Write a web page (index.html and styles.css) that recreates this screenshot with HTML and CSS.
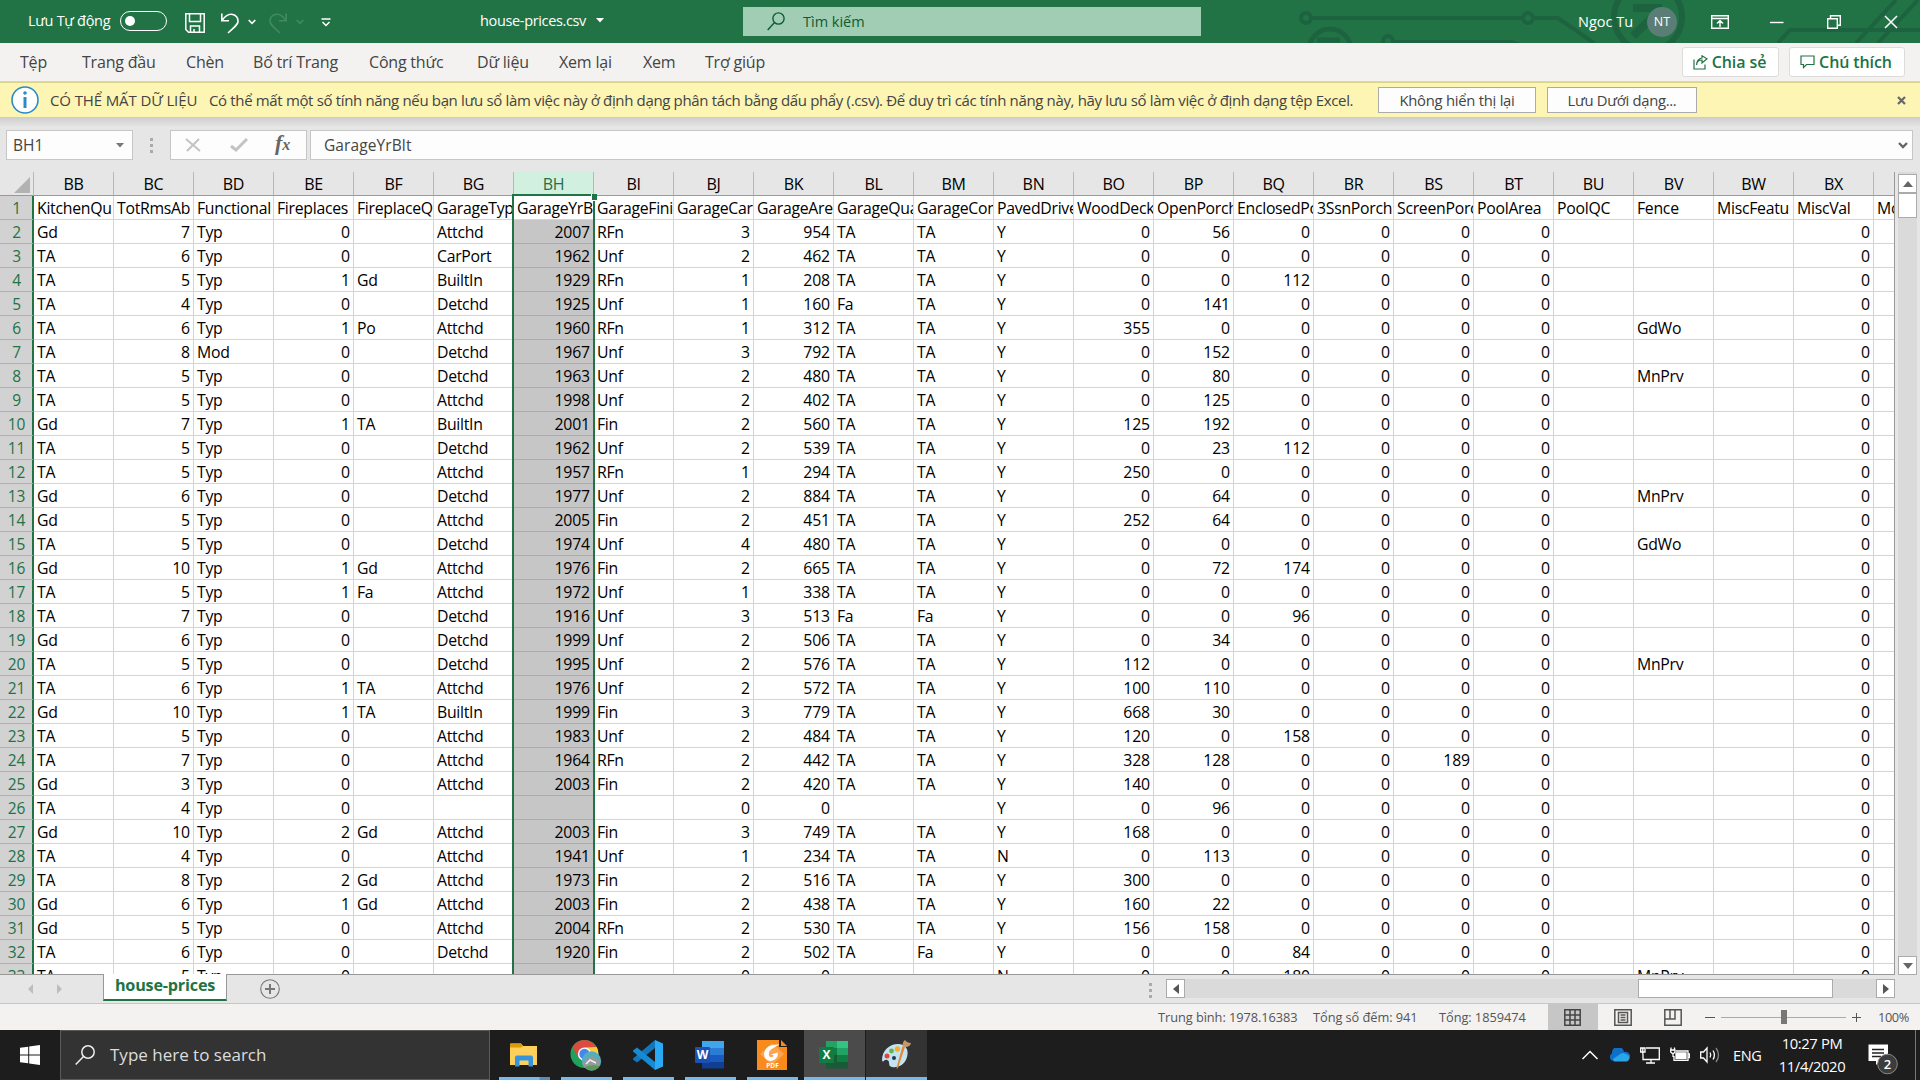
FILE: index.html
```html
<!DOCTYPE html>
<html lang="vi">
<head>
<meta charset="utf-8">
<title>house-prices.csv</title>
<link rel="stylesheet" href="styles.css">
</head>
<body>
<div class="screen">
  <header class="titlebar">
    <svg class="circuit" width="640" height="43" viewBox="1280 0 640 43" fill="none" stroke="#1e6340" stroke-width="4">
      <circle cx="1306" cy="18" r="5"/><path d="M1311 18H1522M1533 18H1558L1594 43"/><circle cx="1528" cy="18" r="5"/>
      <circle cx="1388" cy="41" r="5"/><path d="M1394 42H1512L1520 45"/>
      <circle cx="1330" cy="50" r="21" stroke-width="5"/><path d="M1317 40H1340" stroke-width="5"/>
      <circle cx="1648" cy="17" r="34" stroke-width="6"/><path d="M1633 8H1662M1662 8L1633 36" stroke-width="8"/>
      <path d="M1778 43L1790 30H1920M1856 43L1896 0M1878 43L1918 0"/>
    </svg>
    <span class="autosave">Lưu Tự động</span>
    <span class="toggle"><i></i></span>
    <svg class="ic save" width="20" height="20" viewBox="0 0 20 20" fill="none" stroke="#fff" stroke-width="1.5"><path d="M.8.8H19.2V19.2H3.5L.8 16.5ZM4.5 1V8.5H15.5V1M5.5 19V13H14.5V19M9 16V19"/></svg>
    <svg class="ic undo" width="20" height="21" viewBox="0 0 20 21" fill="none" stroke="#fff" stroke-width="1.6"><path d="M1.8.5V7.8H9M2 7.5C5 3 8 1 11.500 1.200C16 1.500 18.500 5 18 9C17.500 11.500 16 13 8 20"/></svg>
    <svg class="ic chev1" width="8" height="6" viewBox="0 0 8 6" fill="none" stroke="#fff" stroke-width="1.7"><path d="M.7 1L4 4.300L7.300 1"/></svg>
    <svg class="ic redo" width="20" height="21" viewBox="0 0 20 21" fill="none" stroke="#418a60" stroke-width="1.6"><path d="M18.200.5V7.800H11M18 7.500C15 3 12 1 8.500 1.200C4 1.500 1.500 5 2 9C2.500 11.500 4 13 12 20"/></svg>
    <svg class="ic chev2" width="8" height="6" viewBox="0 0 8 6" fill="none" stroke="#418a60" stroke-width="1.700"><path d="M.7 1L4 4.300L7.300 1"/></svg>
    <svg class="ic custom" width="10" height="9" viewBox="0 0 10 9" fill="none" stroke="#fff" stroke-width="1.500"><path d="M.5 1H9.500M1.500 4L5 7.500L8.500 4"/></svg>
    <span class="filename">house-prices.csv</span>
    <svg class="ic filearrow" width="8" height="5" viewBox="0 0 8 5" fill="#fff"><path d="M0 0H8L4 4.500Z"/></svg>
    <div class="search">
      <svg width="19" height="19" viewBox="0 0 19 19" fill="none" stroke="#0e5c30" stroke-width="1.400"><circle cx="11.500" cy="6.500" r="5.600"/><path d="M7.500 10.500L.7 18"/></svg>
      <span>Tìm kiếm</span>
    </div>
    <span class="user">Ngoc Tu</span>
    <span class="avatar">NT</span>
    <svg class="ic ribbon" width="18" height="14" viewBox="0 0 18 14" fill="none" stroke="#fff" stroke-width="1.400"><path d="M.7.7H17.300V13.300H.7ZM1 3.500H17M9 12V6M6 8.500L9 5.500L12 8.500"/></svg>
    <svg class="ic min" width="14" height="14" viewBox="0 0 14 14" stroke="#fff" stroke-width="1.400"><path d="M0 7.500H13.500"/></svg>
    <svg class="ic restore" width="14" height="14" viewBox="0 0 14 14" fill="none" stroke="#fff" stroke-width="1.400"><path d="M.7 3.700H10.300V13.300H.7ZM3.500 3.500V.7H13.300V10.300H10.500"/></svg>
    <svg class="ic close" width="14" height="14" viewBox="0 0 14 14" stroke="#fff" stroke-width="1.500"><path d="M1 1L13 13M13 1L1 13"/></svg>
  </header>

  <nav class="menu">
    <span class="m1">Tệp</span><span class="m2">Trang đầu</span><span class="m3">Chèn</span><span class="m4">Bố trí Trang</span><span class="m5">Công thức</span><span class="m6">Dữ liệu</span><span class="m7">Xem lại</span><span class="m8">Xem</span><span class="m9">Trợ giúp</span>
    <button class="pill share"><svg width="15" height="15" viewBox="0 0 15 15" fill="none" stroke="#217346" stroke-width="1.200"><path d="M1 4.500V14H12V9.500M3.500 10C4 6.500 6 5 9 5V8L14 3.800L9 .8V3C5.500 3.500 3.800 6 3.500 10Z"/></svg>Chia sẻ</button>
    <button class="pill notes"><svg width="15" height="14" viewBox="0 0 15 14" fill="none" stroke="#217346" stroke-width="1.200"><path d="M1 1H14V9.500H6.500L3.500 12.500V9.500H1Z"/></svg>Chú thích</button>
  </nav>

  <div class="warning">
    <svg class="info" width="28" height="28" viewBox="0 0 28 28"><circle cx="14" cy="14" r="13" fill="#fff" stroke="#2b8bc8" stroke-width="1.600"/><path d="M14 11V22" stroke="#2b8bc8" stroke-width="3"/><circle cx="14" cy="7" r="1.800" fill="#2b8bc8"/></svg>
    <strong>CÓ THỂ MẤT DỮ LIỆU</strong>
    <span class="message">Có thể mất một số tính năng nếu bạn lưu sổ làm việc này ở định dạng phân tách bằng dấu phẩy (.csv). Để duy trì các tính năng này, hãy lưu sổ làm việc ở định dạng tệp Excel.</span>
    <button class="hide">Không hiển thị lại</button>
    <button class="saveas">Lưu Dưới dạng...</button>
    <svg class="dismiss" width="9" height="9" viewBox="0 0 9 9" stroke="#666" stroke-width="2.200"><path d="M1 1L8 8M8 1L1 8"/></svg>
  </div>

  <div class="formula">
    <div class="namebox"><span>BH1</span><svg width="8" height="5" viewBox="0 0 8 5" fill="#777"><path d="M0 0H8L4 4.500Z"/></svg></div>
    <span class="dots"><i></i><i></i><i></i></span>
    <div class="fx">
      <svg width="16" height="14" viewBox="0 0 16 14" stroke="#c3c3c3" stroke-width="2" fill="none"><path d="M1 1L15 13M14 1L2 13"/></svg>
      <svg width="18" height="14" viewBox="0 0 18 14" stroke="#c3c3c3" stroke-width="3" fill="none"><path d="M1 8L6 12L17 1"/></svg>
      <em>f<small>x</small></em>
    </div>
    <div class="content"><span>GarageYrBlt</span><svg width="10" height="7" viewBox="0 0 10 7" fill="none" stroke="#666" stroke-width="2.400"><path d="M1 1L5 5L9 1"/></svg></div>
  </div>

  <main class="sheet">
    <div class="grid" id="grid"><div class="selection"><i></i></div></div>
    <div class="vscroll">
      <span class="btn up"><svg width="10" height="6" viewBox="0 0 10 6" fill="#666"><path d="M0 6H10L5 0Z"/></svg></span>
      <span class="thumb"></span>
      <span class="btn down"><svg width="10" height="6" viewBox="0 0 10 6" fill="#666"><path d="M0 0H10L5 6Z"/></svg></span>
    </div>
  </main>

  <div class="tabs">
    <svg class="prev" width="5" height="10" viewBox="0 0 5 10" fill="#bdbdbd"><path d="M5 0V10L0 5Z"/></svg>
    <svg class="next" width="5" height="10" viewBox="0 0 5 10" fill="#bdbdbd"><path d="M0 0V10L5 5Z"/></svg>
    <span class="tab">house-prices</span>
    <svg class="add" width="20" height="20" viewBox="0 0 20 20" fill="none" stroke="#777"><circle cx="10" cy="10" r="9.300" stroke-width="1.100"/><path d="M10 5V15M5 10H15" stroke-width="2"/></svg>
    <span class="dots"><i></i><i></i><i></i></span>
    <div class="hscroll">
      <span class="btn"><svg width="6" height="10" viewBox="0 0 6 10" fill="#555"><path d="M6 0V10L0 5Z"/></svg></span>
      <span class="thumb"></span>
      <span class="btn"><svg width="6" height="10" viewBox="0 0 6 10" fill="#555"><path d="M0 0V10L6 5Z"/></svg></span>
    </div>
  </div>

  <div class="status">
    <span class="s1">Trung bình: 1978.16383</span><span class="s2">Tổng số đếm: 941</span><span class="s3">Tổng: 1859474</span>
    <div class="view on"><svg width="17" height="17" viewBox="0 0 17 17" fill="none" stroke="#444" stroke-width="1.500"><path d="M.8.8H16.200V16.200H.8ZM6 1V16M11 1V16M1 6H16M1 11H16"/></svg></div>
    <div class="view"><svg width="18" height="17" viewBox="0 0 18 17" fill="none" stroke="#555" stroke-width="1.500"><path d="M.8.8H17.200V16.200H.8ZM4.500 3.500H13.500V13.500H4.500ZM6.500 6H11.500M6.500 8.500H11.500M6.500 11H11.500"/></svg></div>
    <div class="view"><svg width="18" height="17" viewBox="0 0 18 17" fill="none" stroke="#555" stroke-width="1.500"><path d="M.8.8H17.200V16.200H.8ZM1 10H11V1M6 1V10"/></svg></div>
    <div class="zoom"><i class="minus"></i><i class="rail"><b></b></i><i class="plus"></i><span>100%</span></div>
  </div>

  <footer class="taskbar">
    <div class="start"><svg width="20" height="20" viewBox="0 0 20 20" fill="#fff"><path d="M0 2.800L8.200 1.700V9.500H0ZM9.200 1.500L20 0V9.500H9.200ZM0 10.500H8.200V18.300L0 17.200ZM9.200 10.500H20V20L9.200 18.500Z"/></svg></div>
    <div class="find"><svg width="20" height="20" viewBox="0 0 20 20" fill="none" stroke="#eee" stroke-width="1.500"><circle cx="13" cy="7" r="6.200"/><path d="M8.500 11.500L.7 19.500"/></svg><span>Type here to search</span></div>
    <div class="app multi"><svg width="28" height="24" viewBox="0 0 28 24"><path d="M0 1.500Q0 .5 1 .5H11L13 3H27V22H0Z" fill="#fdd05b"/><path d="M0 1.500Q0 .5 1 .5H11L13 3L11 4.500H0Z" fill="#dc9a07"/><path d="M5 23.500V14.500Q5 12.500 7 12.500H21Q23 12.500 23 14.500V23.500H18.500V17.500H9.500V23.500Z" fill="#3793dc"/></svg></div>
    <div class="app"><svg width="32" height="32" viewBox="0 0 32 32"><circle cx="14.500" cy="15" r="14" fill="#1fa15c"/><path d="M2.400 8A14 14 0 0 1 26.600 8L14.500 8.500L8.500 19Z" fill="#dd4b3e"/><path d="M26.600 8A14 14 0 0 1 14.500 29L21 18L14.500 8.500Z" fill="#fccd43"/><circle cx="14.500" cy="15" r="6.600" fill="#fff"/><circle cx="14.500" cy="15" r="5.200" fill="#4587ee"/><circle cx="21.500" cy="22" r="9.700" fill="#56adc0"/><path d="M12.300 24L17 20L22 17L29 21L30 26Q22 29 14 28Z" fill="#939b94"/><path d="M14.500 28Q22 25 29.500 27.500Q22 35 14.500 28Z" fill="#5c9958"/><path d="M16 25L20 21L26 24" fill="none" stroke="#eef" stroke-width="1.500"/></svg></div>
    <div class="app"><svg width="30" height="30" viewBox="0 0 30 30"><path d="M22 0L30 3.500V26.500L22 30Z" fill="#29aaf3"/><path d="M22 0V8L4 22.500L0 19.500V18.500Z" fill="#1177bd"/><path d="M22 30V22L4 7.500L0 10.500V11.500Z" fill="#168bd4"/></svg></div>
    <div class="app"><svg width="30" height="28" viewBox="0 0 30 28"><path d="M7 0H29V7H7Z" fill="#41a5ee"/><path d="M7 7H29V14H7Z" fill="#2b7cd3"/><path d="M7 14H29V21H7Z" fill="#185abd"/><path d="M7 21H29V27.500H7Z" fill="#103f91"/><rect y="6" width="15" height="16" rx="1" fill="#1b51b5"/><text class="glyph" x="7.500" y="18" text-anchor="middle">W</text></svg></div>
    <div class="app"><svg width="30" height="30" viewBox="0 0 30 30"><path d="M0 0H22V7H30V30H0Z" fill="#f98b1d"/><path d="M24 0L30 6H24Z" fill="#f98b1d"/><path d="M15 3L27 14L15 25L3 14Z" fill="#fba552"/><path d="M22.500 4.500Q9 3.500 7 13Q7 21 14 21Q21 20 21 12.500L14 14.500L17 15.500Q15 18.500 12.500 16.500Q10.500 13 14 9.500Q17 7.500 22.500 4.500Z" fill="#fff"/><text class="pdf" x="15.500" y="27.500" text-anchor="middle">PDF</text></svg></div>
    <div class="app active"><svg width="30" height="28" viewBox="0 0 30 28"><path d="M7 0H18V7H7Z" fill="#21a366"/><path d="M18 0H29V7H18Z" fill="#33c481"/><path d="M7 7H18V14H7Z" fill="#107c41"/><path d="M18 7H29V14H18Z" fill="#21a366"/><path d="M7 14H18V21H7Z" fill="#185c37"/><path d="M18 14H29V21H18Z" fill="#107c41"/><path d="M7 21H29V27.500H7Z" fill="#185c37"/><rect y="6" width="15" height="16" rx="1" fill="#107c41"/><text class="glyph" x="7.500" y="18" text-anchor="middle">X</text></svg></div>
    <div class="app open"><svg width="30" height="30" viewBox="0 0 30 30"><path d="M1 20C1 10 9 4 17 4C25 4 28 10 26 17C24 25 17 28 11 27C6 26 10 21 6 20C3 19 2 24 1 20Z" fill="#c3e3f3"/><circle cx="6" cy="16" r="2.500" fill="#e0483d"/><circle cx="10.500" cy="11" r="2.400" fill="#5db947"/><circle cx="16.500" cy="9" r="2.700" fill="#f4b02c"/><circle cx="13" cy="18" r="2" fill="#26384a"/><path d="M24 7L17 28L15.500 29L16 26L21.500 6Z" fill="#e28935"/><path d="M22 6Q21 2 24 0Q26 3 30 3Q29 7 24.500 7Z" fill="#c59867"/></svg></div>
    <div class="tray">
      <svg class="t1" width="16" height="10" viewBox="0 0 16 10" fill="none" stroke="#fff" stroke-width="1.500"><path d="M.5 9L8 1.500L15.500 9"/></svg>
      <svg class="t2" width="20" height="14" viewBox="0 0 20 14"><path d="M4 13A4 4 0 0 1 2 5.500A6 6 0 0 1 14 4A4 4 0 0 1 17 13Z" fill="#0f6fc6"/><path d="M4 13.500L3 11L11 5.500Q14 4 17 6.500A3.800 3.800 0 0 1 17 13.500Z" fill="#2aa5ea"/></svg>
      <svg class="t3" width="20" height="17" viewBox="0 0 20 17" fill="none" stroke="#fff" stroke-width="1.300"><path d="M6 1H19.300V12.500H3V7M11 13V16M6 16H15M.7 1H5V5H.7ZM2.800 1V7"/></svg>
      <svg class="t4" width="20" height="16" viewBox="0 0 20 16" fill="none" stroke="#fff" stroke-width="1.300"><path d="M6 4H18V13.300H4V9M18.500 7H19.500V10.500H18.500M1 .5V3M4.500.5V3M.7 3H5V5L3 7L.7 5ZM3 7V10"/><path d="M6 6H16V11.500H6Z" fill="#fff"/></svg>
      <svg class="t5" width="20" height="18" viewBox="0 0 20 18" fill="none" stroke="#fff" stroke-width="1.300"><path d="M.7 6V12H3.500L7 16V2L3.500 6ZM10 6.500Q11.500 9 10 11.500M13 4.500Q15.800 9 13 13.500"/><path d="M16 2Q21 9 16 16" stroke="#888"/></svg>
      <span class="lang">ENG</span>
      <div class="clock"><span>10:27 PM</span><span>11/4/2020</span></div>
      <svg class="notif" width="31" height="31" viewBox="0 0 31 31"><path d="M.5.5H20V17H12L8 21V17H.5Z" fill="#fff"/><path d="M4 5.500H16M4 9H16M4 12.500H13" stroke="#222" stroke-width="1.300"/><circle cx="19.500" cy="20" r="9.800" fill="#3c3c3c" stroke="#888"/><text class="badge" x="19.500" y="25" text-anchor="middle">2</text></svg>
    </div>
  </footer>
</div>
<script src="grid.js"></script>
</body>
</html>
```
FILE: styles.css
```css
* { box-sizing: border-box; }
body { margin: 0; font-family: "Open Sans", "Noto Sans", sans-serif; }
i, em, b { display: block; font-style: normal; }
svg { display: block; flex: none; }
span, button { white-space: nowrap; }
button { font-family: inherit; margin: 0; padding: 0; }
.screen { width: 1920px; height: 1080px; overflow: hidden; display: flex; flex-direction: column; background: #e6e6e6; }

.titlebar { height: 43px; flex: none; background: #217346; color: #fff; display: flex; align-items: center; font-size: 14.5px; position: relative; padding-bottom: 2px; }
.circuit { position: absolute; right: 0; top: 0; }
.titlebar > :not(.circuit) { position: relative; flex: none; }
.autosave { width: 92px; padding-left: 28px; letter-spacing: -.3px; box-sizing: content-box; }
.toggle { width: 47px; height: 20px; border: 1.500px solid #fff; border-radius: 10px; padding: 4px 4px; }
.toggle i { width: 10px; height: 10px; border-radius: 50%; background: #fff; }
.save { margin: 5px 0 0 18px; }
.undo { margin: 5px 0 0 15px; }
.chev1 { margin: 3px 0 0 8px; }
.redo { margin: 5px 0 0 12px; }
.chev2 { margin: 3px 0 0 8px; }
.custom { margin: 3px 0 0 17px; }
.filename { margin-left: 149px; width: 108px; letter-spacing: -.35px; margin-top: -1px; }
.filearrow { margin-left: 8px; }
.search { margin-left: 139px; width: 458px; height: 29px; margin-top: 2px; background: #a0cdb4; display: flex; align-items: center; color: #0e5c30; padding-left: 24px; gap: 17px; }
.user { margin-left: 377px; width: 57px; margin-top: 2px; }
.avatar { margin: 2px 0 0 12px; width: 30px; height: 30px; border-radius: 50%; background: #5a7d75; text-align: center; font-size: 12.5px; line-height: 30px; }
.ribbon { margin-left: 34px; margin-top: 2px; }
.min { margin-left: 41px; margin-top: 2px; }
.restore { margin-left: 43px; margin-top: 2px; }
.close { margin-left: 43px; margin-top: 2px; }

.menu { height: 39px; flex: none; background: #f3f2f1; border-bottom: 1px solid #d4d4d4; display: flex; align-items: center; color: #444; font-size: 16px; padding-left: 20px; position: relative; }
.m1 { width: 62px; } .m2 { width: 104px; } .m3 { width: 67px; } .m4 { width: 116px; } .m5 { width: 108px; }
.m6 { width: 82px; } .m7 { width: 84px; } .m8 { width: 62px; } .m9 { width: 977px; }
.menu > span { flex: none; letter-spacing: -.2px; }
.pill { height: 30px; background: #fff; border: 1px solid #dedcda; border-radius: 3px; color: #217346; font-weight: 600; font-size: 16px; display: flex; align-items: center; justify-content: center; gap: 4px; letter-spacing: -.1px; padding-right: 2px; flex: none; }
.share { width: 97px; } .notes { width: 116px; margin-left: 10px; }

.warning { height: 36px; flex: none; background: #fcf5b4; border-top: 1px solid #d9d48a; border-bottom: 1px solid #d9d48a; display: flex; align-items: center; color: #444; font-size: 15px; padding-left: 11px; }
.warning strong { font-weight: 500; margin-left: 11px; width: 159px; flex: none; letter-spacing: -.12px; }
.message { width: 1169px; flex: none; letter-spacing: -.345px; }
.warning button { height: 26px; background: #fdfdfd; border: 1px solid #ababab; color: #444; font-size: 14.8px; letter-spacing: -.3px; flex: none; }
.warning .hide { width: 158px; letter-spacing: -.25px; }
.saveas { width: 150px; margin-left: 11px; }
.dismiss { margin-left: 200px; }

.formula { height: 54px; flex: none; padding: 12px 7px 12px 6px; display: flex; background: linear-gradient(#cfcfcf, #e6e6e6 9px); color: #444; font-size: 15.5px; }
.formula > div { border: 1px solid #c6c6c6; background: #fdfdfd; display: flex; align-items: center; }
.namebox { width: 127px; padding: 0 8px 0 6px; justify-content: space-between; }
.dots { display: flex; flex-direction: column; gap: 3px; align-self: center; }
.dots i { width: 3px; height: 3px; background: #aaa; }
.formula .dots { margin: 0 17px; }
.fx { width: 137px; padding-left: 14px; }
.fx svg + svg { margin-left: 29px; }
.fx em { margin-left: 27px; font: italic 700 22px/26px "Liberation Serif", serif; color: #666; padding-bottom: 3px; }
.fx small { font-size: 16px; }
.content { margin-left: 3px; flex: 1; padding: 0 4px 0 13px; justify-content: space-between; }
.content span { letter-spacing: .1px; }

.sheet { height: 803px; flex: none; display: flex; }
.grid { width: 1895px; height: 803px; overflow: hidden; border-right: 1px solid #999; border-bottom: 1px solid #999; position: relative; }
.row { display: flex; height: 24px; width: 2000px; background: #fff; }
.head { background: #e6e6e6; }
.cell { width: 80px; height: 24px; flex: none; border-right: 1px solid #d4d4d4; border-bottom: 1px solid #d4d4d4; padding: 0 3px 0 3px; overflow: hidden; white-space: nowrap; font-size: 15.800px; letter-spacing: -.28px; line-height: 24px; color: #000; }
.num { text-align: right; letter-spacing: -.15px; }
.row:nth-child(n+4) .sel { background: #c6c6c6; border-bottom-color: #ababab; }
.head .cell { text-align: center; border-color: #b8b8b8; border-bottom-color: #999; font-size: 16px; line-height: 24px; letter-spacing: -.3px; padding: 0 3px; }
.head .sel { background: #d2f0e0; color: #217346; }
.cell.rowno { width: 34px; background: #d2d2d2; border-right: 2px solid #217346; border-bottom-color: #b0b0b0; color: #217346; text-align: center; padding: 0 0 0 1px; font-size: 15.500px; letter-spacing: -.2px; }
.head .cell.corner { width: 34px; padding: 5px 3px 0 14px; border-right: 1px solid #b8b8b8; }
.corner svg { width: 16px; height: 16px; }
.selection { position: absolute; left: 512px; top: 22px; width: 83px; height: 800px; border: 2.500px solid #217346; z-index: 1; }
.selection i { position: absolute; right: -4px; top: -2px; width: 6px; height: 7px; background: #217346; border-bottom: 1px solid #fff; border-left: 1px solid #fff; }
.vscroll { margin-left: 3px; width: 19px; background: #dadada; display: flex; flex-direction: column; padding-top: 2px; }
.btn { background: #fff; border: 1px solid #ababab; display: flex; align-items: center; justify-content: center; flex: none; }
.up, .down { height: 19px; }
.thumb { background: #fff; border: 1px solid #ababab; }
.vscroll .thumb { height: 25px; }
.down { margin-top: auto; }

.tabs { height: 29px; flex: none; border-bottom: 1px solid #c6c6c6; display: flex; align-items: flex-start; }
.prev { margin: 9px 0 0 28px; } .next { margin: 9px 0 0 24px; }
.tab { margin: -1px 0 0 41px; width: 124px; height: 27px; background: #fff; border: 1px solid #999; border-top: 0; border-bottom: 2px solid #217346; color: #217346; font-weight: 700; font-size: 16.200px; line-height: 22px; text-align: center; letter-spacing: -.2px; position: relative; flex: none; }
.add { margin: 4px 0 0 33px; }
.tabs .dots { margin: 8px 0 0 869px; align-self: flex-start; }
.hscroll { margin: 4px 0 0 14px; width: 729px; height: 19px; background: #dadada; display: flex; }
.hscroll .btn { width: 19px; }
.hscroll .thumb { width: 195px; margin: 0 43px 0 453px; }

.status { height: 26px; flex: none; background: #f3f2f1; display: flex; align-items: center; color: #555; font-size: 12.800px; padding-left: 1158px; }
.status > span { flex: none; letter-spacing: -.06px; }
.s1 { width: 155px; } .s2 { width: 126px; } .s3 { width: 109px; }
.view { width: 50px; height: 26px; display: flex; align-items: center; justify-content: center; flex: none; }
.view.on { background: #c6c6c6; padding-right: 2px; }
.zoom { display: flex; align-items: center; margin-left: 7px; }
.zoom i { background: #555; }
.minus { width: 10px; height: 1px; }
.zoom .rail { width: 125px; height: 1px; margin: 0 6px; background: #aaa; display: flex; align-items: center; justify-content: center; }
.zoom .rail b { width: 6px; height: 14px; background: #777; flex: none; }
.zoom .plus { width: 9px; height: 9px; background: linear-gradient(#555, #555) center / 9px 1px no-repeat, linear-gradient(#555, #555) center / 1px 9px no-repeat; }
.zoom span { margin-left: 17px; letter-spacing: -.4px; }

.taskbar { height: 50px; flex: none; background: #1d1d1d; display: flex; color: #fff; }
.start { width: 60px; display: flex; align-items: center; justify-content: center; flex: none; }
.find { width: 430px; background: #333; border: 1px solid #5a5a5a; display: flex; align-items: center; padding-left: 14px; gap: 15px; font-size: 17px; color: #ddd; flex: none; margin-right: 4px; }
.find span { margin-top: -1px; }
.app { width: 61px; margin-right: 1px; padding-right: 1px; display: flex; align-items: center; justify-content: center; flex: none; background: linear-gradient(#76b9ed, #76b9ed) 5px 100% / 51px 3px no-repeat; }
.multi { background: linear-gradient(90deg, #76b9ed 40px, #5a8cb4 41px) 5px 100% / 51px 3px no-repeat; }
.active { background: linear-gradient(#76b9ed, #76b9ed) 0 100% / 61px 3px no-repeat #4b4b4b; }
.open { background: linear-gradient(#76b9ed, #76b9ed) 0 100% / 61px 3px no-repeat #333; }
.glyph { font: 700 12px "Open Sans", sans-serif; fill: #fff; }
.pdf { font: 700 6.500px "Open Sans", sans-serif; fill: #fff; }
.tray { margin-left: auto; margin-right: 4px; border-right: 1px solid #777; width: 334px; display: flex; align-items: center; flex: none; }
.t2 { margin-left: 12px; } .t3, .t4, .t5 { margin-left: 10px; }
.lang { margin-left: 13px; width: 30px; font-size: 14.500px; letter-spacing: -.3px; }
.clock { margin-left: 14px; width: 70px; display: flex; flex-direction: column; align-items: center; font-size: 14.800px; line-height: 23px; letter-spacing: -.4px; padding-bottom: 1px; }
.notif { margin: 9px 0 0 21px; }
.badge { font: 600 13px "Open Sans", sans-serif; fill: #fff; }
```
FILE: grid.js
```js
const columns = "BB BC BD BE BF BG BH BI BJ BK BL BM BN BO BP BQ BR BS BT BU BV BW BX".split(" ");
const titles = ["KitchenQu", "TotRmsAb", "Functional", "Fireplaces", "FireplaceQ", "GarageTyp", "GarageYrB", "GarageFini", "GarageCar", "GarageAre", "GarageQua", "GarageCon", "PavedDrive", "WoodDeck", "OpenPorch", "EnclosedPo", "3SsnPorch", "ScreenPorc", "PoolArea", "PoolQC", "Fence", "MiscFeatu", "MiscVal", "Mo"];

// kitchen,rooms,functional,fireplaces,quality,type,year,finish,cars,area,qual,cond,paved,deck,open,enclosed,screen,fence
const homes = `Gd,7,Typ,0,,Attchd,2007,RFn,3,954,TA,TA,Y,0,56,0,0,
TA,6,Typ,0,,CarPort,1962,Unf,2,462,TA,TA,Y,0,0,0,0,
TA,5,Typ,1,Gd,BuiltIn,1929,RFn,1,208,TA,TA,Y,0,0,112,0,
TA,4,Typ,0,,Detchd,1925,Unf,1,160,Fa,TA,Y,0,141,0,0,
TA,6,Typ,1,Po,Attchd,1960,RFn,1,312,TA,TA,Y,355,0,0,0,GdWo
TA,8,Mod,0,,Detchd,1967,Unf,3,792,TA,TA,Y,0,152,0,0,
TA,5,Typ,0,,Detchd,1963,Unf,2,480,TA,TA,Y,0,80,0,0,MnPrv
TA,5,Typ,0,,Attchd,1998,Unf,2,402,TA,TA,Y,0,125,0,0,
Gd,7,Typ,1,TA,BuiltIn,2001,Fin,2,560,TA,TA,Y,125,192,0,0,
TA,5,Typ,0,,Detchd,1962,Unf,2,539,TA,TA,Y,0,23,112,0,
TA,5,Typ,0,,Attchd,1957,RFn,1,294,TA,TA,Y,250,0,0,0,
Gd,6,Typ,0,,Detchd,1977,Unf,2,884,TA,TA,Y,0,64,0,0,MnPrv
Gd,5,Typ,0,,Attchd,2005,Fin,2,451,TA,TA,Y,252,64,0,0,
TA,5,Typ,0,,Detchd,1974,Unf,4,480,TA,TA,Y,0,0,0,0,GdWo
Gd,10,Typ,1,Gd,Attchd,1976,Fin,2,665,TA,TA,Y,0,72,174,0,
TA,5,Typ,1,Fa,Attchd,1972,Unf,1,338,TA,TA,Y,0,0,0,0,
TA,7,Typ,0,,Detchd,1916,Unf,3,513,Fa,Fa,Y,0,0,96,0,
Gd,6,Typ,0,,Detchd,1999,Unf,2,506,TA,TA,Y,0,34,0,0,
TA,5,Typ,0,,Detchd,1995,Unf,2,576,TA,TA,Y,112,0,0,0,MnPrv
TA,6,Typ,1,TA,Attchd,1976,Unf,2,572,TA,TA,Y,100,110,0,0,
Gd,10,Typ,1,TA,BuiltIn,1999,Fin,3,779,TA,TA,Y,668,30,0,0,
TA,5,Typ,0,,Attchd,1983,Unf,2,484,TA,TA,Y,120,0,158,0,
TA,7,Typ,0,,Attchd,1964,RFn,2,442,TA,TA,Y,328,128,0,189,
Gd,3,Typ,0,,Attchd,2003,Fin,2,420,TA,TA,Y,140,0,0,0,
TA,4,Typ,0,,,,,0,0,,,Y,0,96,0,0,
Gd,10,Typ,2,Gd,Attchd,2003,Fin,3,749,TA,TA,Y,168,0,0,0,
TA,4,Typ,0,,Attchd,1941,Unf,1,234,TA,TA,N,0,113,0,0,
TA,8,Typ,2,Gd,Attchd,1973,Fin,2,516,TA,TA,Y,300,0,0,0,
Gd,6,Typ,1,Gd,Attchd,2003,Fin,2,438,TA,TA,Y,160,22,0,0,
Gd,5,Typ,0,,Attchd,2004,RFn,2,530,TA,TA,Y,156,158,0,0,
TA,6,Typ,0,,Detchd,1920,Fin,2,502,TA,Fa,Y,0,0,84,0,
TA,5,Typ,0,,,,,0,0,,,N,0,0,180,0,MnPrv`.split("\n").map(line => {
  const v = line.split(",");
  return [...v.slice(0, 16), "0", v[16], "0", "", v[17], "", "0", ""];
});

const grid = document.getElementById("grid");

function addRow(kind, label, values) {
  const row = document.createElement("div");
  row.className = "row" + kind;
  const first = document.createElement("div");
  first.className = kind ? "cell corner" : "cell rowno";
  if (kind) first.innerHTML = '<svg viewBox="0 0 16 16" fill="#b2b2b2"><path d="M16 0V16H0Z"/></svg>';
  else first.textContent = label;
  row.append(first);
  values.forEach((value, i) => {
    const cell = document.createElement("div");
    cell.className = "cell" + (/^\d+$/.test(value) ? " num" : "") + (i === 6 ? " sel" : "");
    cell.textContent = value;
    row.append(cell);
  });
  grid.append(row);
}

addRow(" head", "", [...columns, ""]);
addRow("", "1", titles);
homes.forEach((home, i) => addRow("", String(i + 2), home));
```
